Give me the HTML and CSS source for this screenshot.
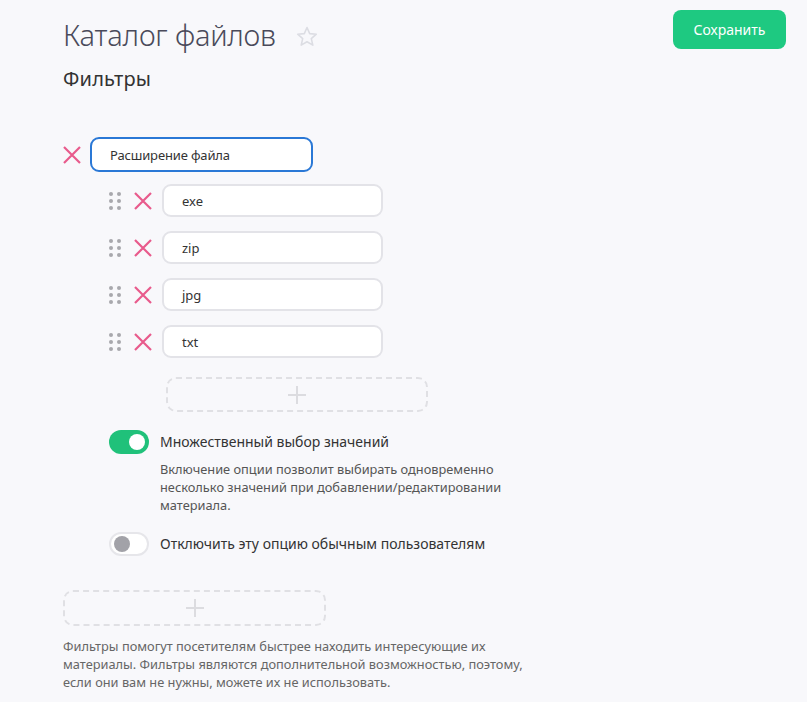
FILE: index.html
```html
<!DOCTYPE html>
<html lang="ru">
<head>
<meta charset="utf-8">
<link rel="stylesheet" href="styles.css">
</head>
<body>
<div class="page">
  <header class="head">
    <div class="title-wrap">
      <h1 class="title">Каталог файлов</h1>
      <svg class="star" width="22" height="21" viewBox="0 0 22 21"><path d="M11 1.5l2.7 6.1 6.6.6-5 4.4 1.5 6.5L11 15.7l-5.8 3.4 1.5-6.5-5-4.4 6.6-.6z" fill="none" stroke="#dcdde3" stroke-width="1.6" stroke-linejoin="round"/></svg>
    </div>
    <button class="save">Сохранить</button>
  </header>
  <h2 class="subtitle">Фильтры</h2>

  <div class="filter">
    <div class="filter-row">
      <span class="x"><svg width="18" height="18" viewBox="0 0 18 18"><path d="M1 1l16 16M17 1L1 17" stroke="#e85a8c" stroke-width="2.2"/></svg></span>
      <div class="input active">Расширение файла</div>
    </div>

    <div class="values">
      <div class="value-row">
        <span class="drag"><i></i><i></i><i></i><i></i><i></i><i></i></span>
        <span class="x"><svg width="18" height="18" viewBox="0 0 18 18"><path d="M1 1l16 16M17 1L1 17" stroke="#e85a8c" stroke-width="2.2"/></svg></span>
        <div class="input value">exe</div>
      </div>
      <div class="value-row">
        <span class="drag"><i></i><i></i><i></i><i></i><i></i><i></i></span>
        <span class="x"><svg width="18" height="18" viewBox="0 0 18 18"><path d="M1 1l16 16M17 1L1 17" stroke="#e85a8c" stroke-width="2.2"/></svg></span>
        <div class="input value">zip</div>
      </div>
      <div class="value-row">
        <span class="drag"><i></i><i></i><i></i><i></i><i></i><i></i></span>
        <span class="x"><svg width="18" height="18" viewBox="0 0 18 18"><path d="M1 1l16 16M17 1L1 17" stroke="#e85a8c" stroke-width="2.2"/></svg></span>
        <div class="input value">jpg</div>
      </div>
      <div class="value-row">
        <span class="drag"><i></i><i></i><i></i><i></i><i></i><i></i></span>
        <span class="x"><svg width="18" height="18" viewBox="0 0 18 18"><path d="M1 1l16 16M17 1L1 17" stroke="#e85a8c" stroke-width="2.2"/></svg></span>
        <div class="input value">txt</div>
      </div>
      <div class="add add-value"><svg width="20" height="20" viewBox="0 0 20 20"><path d="M10 1v18M1 10h18" stroke="#dcdce0" stroke-width="2"/></svg></div>
    </div>

    <div class="options">
      <div class="option">
        <span class="toggle on"><span class="knob"></span></span>
        <div class="opt-body">
          <div class="opt-label">Множественный выбор значений</div>
          <p class="opt-desc">Включение опции позволит выбирать одновременно несколько значений при добавлении/редактировании материала.</p>
        </div>
      </div>
      <div class="option">
        <span class="toggle off"><span class="knob"></span></span>
        <div class="opt-body">
          <div class="opt-label">Отключить эту опцию обычным пользователям</div>
        </div>
      </div>
    </div>
  </div>

  <div class="add add-filter"><svg width="20" height="20" viewBox="0 0 20 20"><path d="M10 1v18M1 10h18" stroke="#dcdce0" stroke-width="2"/></svg></div>
  <p class="note">Фильтры помогут посетителям быстрее находить интересующие их материалы. Фильтры являются дополнительной возможностью, поэтому, если они вам не нужны, можете их не использовать.</p>
</div>
</body>
</html>
```

FILE: styles.css
```css
* { box-sizing: border-box; }
html, body { margin: 0; padding: 0; }
body {
  background: #f8f8fb;
  font-family: "Noto Sans", "Open Sans", sans-serif;
  color: #333;
  width: 807px;
  height: 702px;
  overflow: hidden;
}
.page {
  padding: 10px 21px 0 63px;
}
.head {
  display: flex;
  justify-content: space-between;
  align-items: flex-start;
}
.title-wrap {
  display: flex;
  align-items: center;
  gap: 20px;
  margin-top: 6px;
}
.title {
  margin: 0;
  font-size: 29px;
  font-weight: 300;
  color: #4a4a5a;
  line-height: 38px;
  letter-spacing: -0.2px;
}
.star { margin-top: 2px; }
.save {
  width: 113px;
  height: 39px;
  border: none;
  border-radius: 8px;
  background: #1ec981;
  color: #fff;
  font-family: inherit;
  font-size: 14px;
  padding: 0;
  cursor: pointer;
}
.subtitle {
  margin: 12px 0 0;
  font-size: 20px;
  font-weight: 400;
  color: #333;
  line-height: 26px;
  letter-spacing: 0.2px;
}
.filter { margin-top: 45px; }
.filter-row {
  display: flex;
  align-items: center;
  gap: 9px;
}
.x { display: flex; width: 18px; height: 18px; }
.input {
  background: #fff;
  border: 2px solid #e3e3e8;
  border-radius: 9px;
  font-size: 13px;
  color: #333;
  display: flex;
  align-items: center;
}
.input.active {
  width: 223px;
  height: 35px;
  border-color: #2a78d6;
  padding-left: 18px;
  letter-spacing: -0.15px;
}
.values {
  margin-top: 12px;
  margin-left: 46px;
  display: flex;
  flex-direction: column;
  gap: 14px;
}
.value-row {
  display: flex;
  align-items: center;
}
.drag {
  display: grid;
  grid-template-columns: 4px 4px;
  grid-auto-rows: 4px;
  column-gap: 4px;
  row-gap: 3px;
  margin-right: 13px;
}
.drag i {
  display: block;
  width: 4px;
  height: 4px;
  border-radius: 50%;
  background: #a8a8ad;
}
.value-row .x { margin-right: 10px; }
.input.value {
  width: 221px;
  height: 33px;
  padding-left: 18px;
}
.add {
  border: 2px dashed #e0e0e4;
  border-radius: 10px;
  display: flex;
  align-items: center;
  justify-content: center;
}
.add-value {
  width: 262px;
  height: 35px;
  margin-left: 57px;
  margin-top: 5px;
}
.options {
  margin-top: 18px;
  margin-left: 46px;
  display: flex;
  flex-direction: column;
  gap: 18px;
}
.option {
  display: flex;
  align-items: flex-start;
  gap: 11px;
}
.toggle {
  position: relative;
  flex: none;
  width: 40px;
  height: 24px;
  border-radius: 12px;
}
.toggle.on { background: #20c17a; }
.toggle.off { background: #fff; border: 2px solid #e6e6ea; }
.knob {
  position: absolute;
  border-radius: 50%;
}
.toggle.on .knob {
  width: 16px; height: 16px;
  background: #fff;
  top: 4px; right: 4px;
}
.toggle.off .knob {
  width: 16px; height: 16px;
  background: #a2a2a8;
  top: 2px; left: 3px;
}
.opt-label {
  font-size: 14px;
  line-height: 24px;
  color: #333;
}
.opt-desc {
  margin: 6px 0 0;
  width: 360px;
  font-size: 12.8px;
  line-height: 18px;
  color: #555;
}
.add-filter {
  width: 263px;
  height: 36px;
  margin-top: 34px;
}
.note {
  margin: 11px 0 0;
  width: 470px;
  font-size: 12.8px;
  line-height: 18px;
  color: #666;
}
```
